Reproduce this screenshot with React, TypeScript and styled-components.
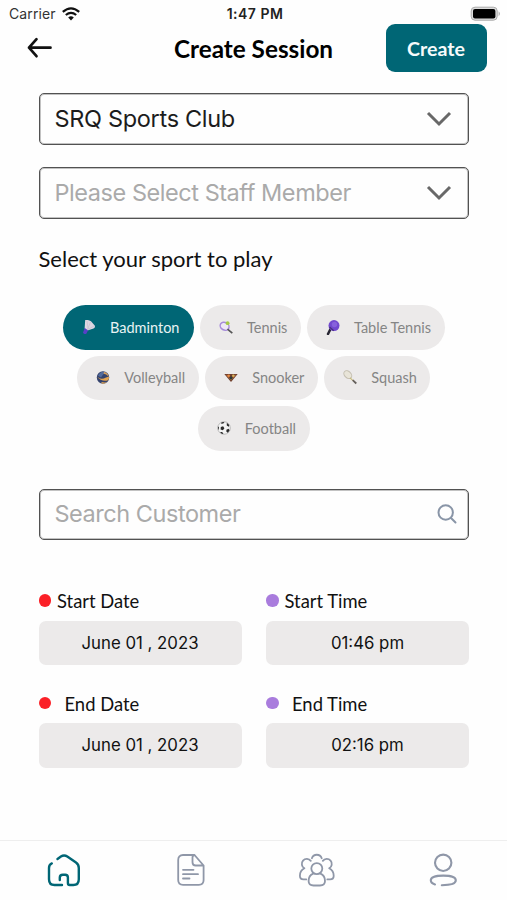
import React from "react";
import styled, { createGlobalStyle } from "styled-components";

const TEAL = "#006675";
const GREY = "#8f97a8";

const GlobalStyle = createGlobalStyle`
  * { box-sizing: border-box; }
  body { margin: 0; background: #fefefe; }
  svg { display: block; flex: none; }
  button { border: 0; padding: 0; margin: 0; background: none; font: inherit; color: inherit; }
`;

const Screen = styled.main`
  width: 507px;
  height: 900px;
  display: flex;
  flex-direction: column;
  overflow: hidden;
  background: #fefefe;
  color: #111;
  font-family: Lato, sans-serif;
  white-space: nowrap;
`;

const StatusBar = styled.div`
  height: 23px;
  flex: none;
  display: grid;
  grid-template-columns: 1fr auto 1fr;
  align-items: center;
  padding: 4px 6px 0 9px;
  font: 400 14px/18px Inter, sans-serif;
  color: #333;
`;

const Carrier = styled.div`
  display: flex;
  align-items: center;
  gap: 6px;
  letter-spacing: 0.1px;
`;

const Clock = styled.div`
  font-size: 14px;
  font-weight: 600;
  color: #222;
  letter-spacing: 0.5px;
`;

const BatterySlot = styled.div`
  display: flex;
  justify-content: flex-end;
`;

const Header = styled.header`
  height: 50px;
  flex: none;
  display: grid;
  grid-template-columns: 101px 1fr 101px;
  align-items: center;
  padding: 0 20.5px;
`;

const BackButton = styled.button`
  padding-left: 6px;
`;

const Title = styled.h1`
  margin: 0;
  padding-top: 1px;
  text-align: center;
  font-size: 24.3px;
  line-height: 30px;
  font-weight: 700;
  color: #000;
`;

const CreateButton = styled.button`
  height: 48.5px;
  border-radius: 9px;
  background: ${TEAL};
  color: #f6fbfb;
  font-size: 19.6px;
  font-weight: 700;
`;

const Content = styled.div`
  flex: 1;
  padding: 20px 38px 0 38.5px;
`;

const Field = styled.div<{ $placeholder?: boolean; $right: number }>`
  height: 51.5px;
  margin-bottom: 22.5px;
  padding: 0 ${(p) => p.$right}px 0 15px;
  display: flex;
  align-items: center;
  justify-content: space-between;
  border: 1px solid #525252;
  box-shadow: inset 0 0 0 1px #c2c2c2;
  border-radius: 5px;
  font: 400 23.5px/30px Inter, sans-serif;
  color: ${(p) => (p.$placeholder ? "#aaa" : "#1c1c1c")};
`;

const FieldText = styled.span<{ $tracking: number }>`
  letter-spacing: ${(p) => p.$tracking}px;
`;

const SectionTitle = styled.h2`
  margin: 26px 0 32.5px;
  font-size: 22px;
  line-height: 28px;
  font-weight: 400;
`;

const Chips = styled.div`
  display: flex;
  flex-direction: column;
  align-items: center;
  gap: 6px;
  margin-bottom: 38px;
`;

const ChipRow = styled.div`
  display: flex;
  gap: 6.5px;
`;

const Chip = styled.button<{ $active?: boolean; $width: number }>`
  width: ${(p) => p.$width}px;
  height: 44.5px;
  padding-left: 19px;
  display: flex;
  align-items: center;
  gap: 14px;
  border-radius: 23px;
  background: ${(p) => (p.$active ? TEAL : "#eceaea")};
  color: ${(p) => (p.$active ? "#e8f3f4" : "#858585")};
  font-size: 14.5px;
`;

const Schedule = styled.div`
  display: grid;
  grid-template-columns: 203px 203px;
  justify-content: space-between;
  row-gap: 26px;
  margin-top: 48.5px;
`;

const SlotLabel = styled.div<{ $gap: number; $dot: string }>`
  height: 25px;
  margin-bottom: 7px;
  display: flex;
  align-items: center;
  gap: ${(p) => p.$gap}px;
  font-size: 18.4px;
  &::before {
    content: "";
    width: 12.5px;
    height: 12.5px;
    margin-bottom: 1px;
    border-radius: 50%;
    background: ${(p) => p.$dot};
  }
`;

const SlotValue = styled.button`
  width: 100%;
  height: 44.5px;
  border-radius: 7px;
  background: #eceaea;
  font: 400 16.8px/22px Inter, sans-serif;
`;

const TabBar = styled.nav`
  height: 60px;
  flex: none;
  display: grid;
  grid-template-columns: repeat(4, 1fr);
  justify-items: center;
  padding: 12px 0 0 1px;
  border-top: 1px solid #eee;
`;

const Wifi = () => (
  <svg width="18" height="14" viewBox="0 0 18 14" fill="none" stroke="#111" strokeWidth="2.2">
    <path d="M.8 4.8Q9-2.2 17.2 4.8M3.8 8Q9 3.7 14.2 8" />
    <path d="M6.2 10.4Q9 8.2 11.8 10.4L9 13.4Z" fill="#111" stroke="none" />
  </svg>
);

const Battery = () => (
  <svg width="31" height="16" viewBox="0 0 31 16">
    <rect x="1.2" y="1.2" width="26" height="13" rx="3.8" fill="#ddd" stroke="#aaa" />
    <rect x="3" y="3" width="22.4" height="9.4" rx="2" fill="#000" />
    <path d="M28.6 5.2q2.6 2.5 0 5Z" fill="#aaa" />
  </svg>
);

const BackArrow = () => (
  <svg width="26" height="22" viewBox="0 0 26 22" fill="none" stroke="#111" strokeWidth="2.7" strokeLinecap="round" strokeLinejoin="round">
    <path d="M23.5 10.7H2M9.5 2.2 2 10.7l7.5 8.5" />
  </svg>
);

const Chevron = () => (
  <svg width="26" height="16" viewBox="0 0 26 16" fill="none" stroke="#686868" strokeWidth="3">
    <path d="m2 2 11 11L24 2" />
  </svg>
);

const SearchIcon = () => (
  <svg width="20" height="20" viewBox="0 0 20 20" fill="none" stroke="#8995a7" strokeWidth="2" strokeLinecap="round">
    <circle cx="8.7" cy="8.5" r="7.2" />
    <path d="m14 14 4.5 4.5" />
  </svg>
);

type Sport = "badminton" | "tennis" | "table" | "volleyball" | "snooker" | "squash" | "football";

const drawings: Record<Sport, React.ReactNode> = {
  badminton: (
    <>
      <path d="M3.2 0Q6-.5 9 1.2l3.9 4.5Q13.3 8 11.5 8.4L5.5 10.5 2.6 8.5Z" fill="#ddd7e2" />
      <path d="m5 .8 1 8M8.5 2 5.5 9.5M12 6 5 10" stroke="#c3bccc" strokeWidth=".6" />
      <path d="m2.8 8 3.2 2.6-1.7 3.1Q2 14.7 1 12.5Z" fill="#5a3fc8" />
    </>
  ),
  tennis: (
    <>
      <ellipse cx="5.6" cy="6.2" rx="4.6" ry="3.8" transform="rotate(30 5.6 6.2)" fill="#eee8f5" stroke="#a78bda" strokeWidth="1.5" />
      <path d="m8.5 9.2 4.8 4" stroke="#555" strokeWidth="1.7" />
      <circle cx="8.6" cy="3.2" r="1.9" fill="#a6c947" />
    </>
  ),
  table: (
    <>
      <path d="m5 8-3 6" stroke="#282633" strokeWidth="2.5" strokeLinecap="round" />
      <circle cx="8" cy="5.6" r="5.5" fill="#7249cf" />
      <path d="m3.5 7 4.2 3.7" stroke="#48317e" strokeWidth="1.3" />
      <circle cx="8.5" cy="4.5" r="2.7" fill="#8762dc" />
    </>
  ),
  volleyball: (
    <>
      <circle cx="7" cy="7.5" r="6.2" fill="#34436e" />
      <path d="M2 5.5Q5 0 10 2.5 7 3.5 5 7.5Z" fill="#526b9d" />
      <path d="M1.3 6.8Q5 10.5 10 7.4l3-1q.5 3-1.5 4.2Q5 11.8 1.3 6.8M5.5 12q4 1 6-.5-2.5 3-6 1.8" fill="#e2a350" />
      <path d="M8 2q4 .5 4.5 4.5-2.5-3-5-2.8" fill="#d9a05b" />
    </>
  ),
  snooker: (
    <>
      <path d="M.3 4h13.4L7 12Z" fill="#6e3e2d" />
      <path d="m2.5 4.8 4.5 5.3 4.5-5.3" stroke="#b96c3b" strokeWidth="1" fill="none" />
      <circle cx="4.7" cy="5.8" r="1.3" fill="#e68a43" />
      <circle cx="9.3" cy="5.8" r="1.3" fill="#d7b25b" />
      <circle cx="7" cy="8" r="1.5" fill="#293b37" />
    </>
  ),
  squash: (
    <>
      <ellipse cx="4.8" cy="4.7" rx="4.5" ry="3.2" transform="rotate(45 4.8 4.7)" fill="#e8e4d8" stroke="#c3beb0" strokeWidth="1" />
      <path d="m7 7.8 3 2.8" stroke="#c5b875" strokeWidth="1.1" />
      <path d="m9.7 10.2 3.6 3.3" stroke="#65605c" strokeWidth="1.8" />
    </>
  ),
  football: (
    <>
      <circle cx="7" cy="7" r="6.3" fill="#f3f3f3" stroke="#999" strokeWidth=".6" />
      <path d="m3.8 6 2.3-.7 1.3 2-1.5 1.9-2.3-.8ZM4.5 1.3 7.4.9 6.7 2.3 4.3 3ZM9.8 1.8l2.5 2.3-.5 1.7-2-1.3ZM.9 5.4l1 .5-.1 2.2L1.2 9ZM3 10.9l2.2.2 1.3 1.8-1.8-.1ZM9.4 8.8l2.1-1.1 1.1 1.5-1.7 2.6-1.5-1Z" fill="#292929" />
    </>
  ),
};

const SportIcon = ({ sport }: { sport: Sport }) => (
  <svg width="14" height="15" viewBox="0 0 14 15" fill="none">{drawings[sport]}</svg>
);

const HomeIcon = () => (
  <svg width="34" height="34" viewBox="0 0 34 34" fill="none" stroke={TEAL} strokeWidth="2.4" strokeLinecap="round" strokeLinejoin="round">
    <path d="M4.8 10.4Q2 11.6 2 15v11.2q0 5.8 5.5 5.8H15M10.5 6l3.4-2.4q3.2-2.2 6.4 0L29 9.6q2.8 2 2.8 5.3v11.3q0 5.8-5.5 5.8h-3.6q-1.8 0-1.8-2v-5.5q0-2.7-2.7-2.7h-2.4q-3 0-3 2.7V27" />
  </svg>
);

const DocumentIcon = () => (
  <svg width="28" height="33" viewBox="0 0 28 33" fill="none" stroke={GREY} strokeWidth="1.8" strokeLinecap="round" strokeLinejoin="round">
    <path d="M17.5 2H6Q1.2 2 1.2 7v20q0 4.8 4.8 4.8h15.8q4.8 0 4.8-4.8V12.5L17.5 2q-2 0-2 2.5v4.7q0 3.3 3.2 3.3h7.8M6 16.8h10.5M6 21.2h15M6 25.5h6.5" />
  </svg>
);

const GroupIcon = () => (
  <svg width="36" height="34" viewBox="0 0 36 34" fill="none" stroke={GREY} strokeWidth="1.8" strokeLinecap="round" strokeLinejoin="round">
    <circle cx="17.8" cy="15.6" r="5.5" />
    <path d="M14.2 20.6Q9.6 22.4 9.6 28q0 4.5 5 4.5H21q5 0 5-4.5 0-5.6-4.6-7.4" />
    <path d="M12.9 5.2a5.2 5.2 0 0 1 9.8 0" />
    <path d="M11.8 7.9a5 5 0 1 0-6.4 7.4Q.9 17.5.9 22.8q0 3.6 3.6 3.6h2.8" />
    <path d="M23.8 7.9a5 5 0 1 1 6.4 7.4q4.5 2.2 4.5 7.5 0 3.6-3.6 3.6h-2.8" />
  </svg>
);

const ProfileIcon = () => (
  <svg width="30" height="34" viewBox="0 0 30 34" fill="none" stroke={GREY} strokeWidth="2.1" strokeLinecap="round">
    <circle cx="14.2" cy="9.8" r="8.2" />
    <path d="M6 31.5Q1.8 30.2 1.8 27.3q0-4.7 12.5-4.7t12.5 4.7q0 4.9-14 4.9" />
  </svg>
);

interface ChipItem { sport: Sport; label: string; width: number }

const chipRows: ChipItem[][] = [
  [
    { sport: "badminton", label: "Badminton", width: 130.5 },
    { sport: "tennis", label: "Tennis", width: 100.5 },
    { sport: "table", label: "Table Tennis", width: 137.5 },
  ],
  [
    { sport: "volleyball", label: "Volleyball", width: 121.5 },
    { sport: "snooker", label: "Snooker", width: 112.5 },
    { sport: "squash", label: "Squash", width: 106 },
  ],
  [{ sport: "football", label: "Football", width: 112 }],
];

const slots = [
  { label: "Start Date", value: "June 01 , 2023", dot: "#fb2027", gap: 6 },
  { label: "Start Time", value: "01:46 pm", dot: "#a97cdd", gap: 6 },
  { label: "End Date", value: "June 01 , 2023", dot: "#fb2027", gap: 13.5 },
  { label: "End Time", value: "02:16 pm", dot: "#a97cdd", gap: 13.5 },
];

export default function App() {
  return (
    <>
      <GlobalStyle />
      <Screen>
        <StatusBar>
          <Carrier>Carrier <Wifi /></Carrier>
          <Clock>1:47 PM</Clock>
          <BatterySlot><Battery /></BatterySlot>
        </StatusBar>
        <Header>
          <BackButton aria-label="Back"><BackArrow /></BackButton>
          <Title>Create Session</Title>
          <CreateButton>Create</CreateButton>
        </Header>
        <Content>
          <Field $right={16.5}><FieldText $tracking={-0.32}>SRQ Sports Club</FieldText><Chevron /></Field>
          <Field $right={16.5} $placeholder><FieldText $tracking={-0.45}>Please Select Staff Member</FieldText><Chevron /></Field>
          <SectionTitle>Select your sport to play</SectionTitle>
          <Chips>
            {chipRows.map((row, index) => (
              <ChipRow key={index}>
                {row.map((chip) => (
                  <Chip key={chip.sport} $width={chip.width} $active={chip.sport === "badminton"}>
                    <SportIcon sport={chip.sport} />
                    {chip.label}
                  </Chip>
                ))}
              </ChipRow>
            ))}
          </Chips>
          <Field $right={11.5} $placeholder><FieldText $tracking={-0.46}>Search Customer</FieldText><SearchIcon /></Field>
          <Schedule>
            {slots.map((slot) => (
              <div key={slot.label}>
                <SlotLabel $gap={slot.gap} $dot={slot.dot}>{slot.label}</SlotLabel>
                <SlotValue>{slot.value}</SlotValue>
              </div>
            ))}
          </Schedule>
        </Content>
        <TabBar>
          <HomeIcon />
          <DocumentIcon />
          <GroupIcon />
          <ProfileIcon />
        </TabBar>
      </Screen>
    </>
  );
}
